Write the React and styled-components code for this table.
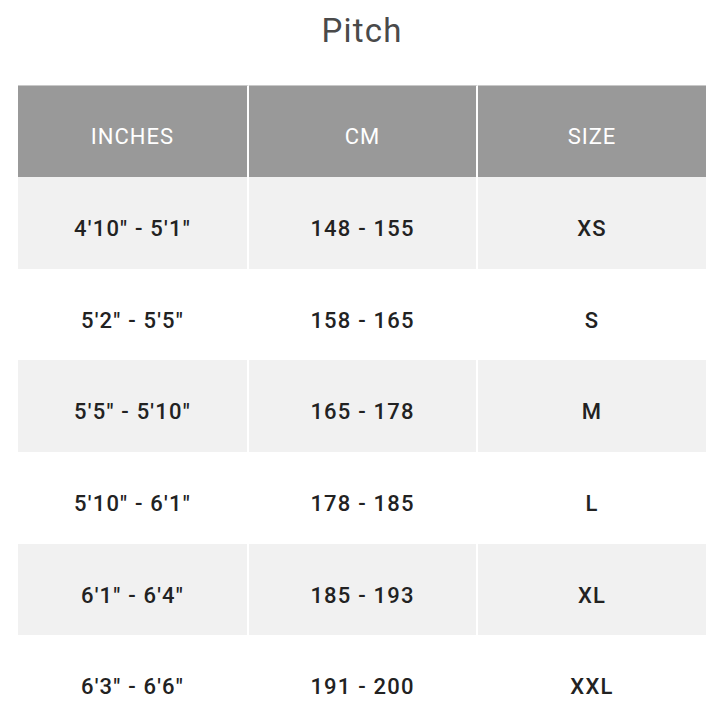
import React from "react";
import styled, { createGlobalStyle } from "styled-components";

const Global = createGlobalStyle`
  html, body { margin: 0; padding: 0; background: #fff; }
  body { font-family: Roboto, "DejaVu Sans", sans-serif; }
`;

const Page = styled.div`
  width: 722px;
  padding: 0 16px 0 18px;
  box-sizing: border-box;
`;

const Title = styled.h1`
  margin: 0;
  height: 85px;
  padding-top: 11px;
  box-sizing: border-box;
  text-align: center;
  font-size: 33px;
  font-weight: 400;
  color: #4a4a4a;
  line-height: 40px;
  letter-spacing: 1.2px;
`;

const Table = styled.table`
  width: 688px;
  border-collapse: separate;
  border-spacing: 0;
  table-layout: fixed;
`;

const Col = styled.col`
  width: ${(p) => p.$w}px;
`;

const HeadCell = styled.th`
  height: 92px;
  padding: 9px 0 0;
  background: #999999;
  border-top: 1px solid #c8c8c8;
  border-right: ${(p) => (p.$last ? "none" : "2px solid #fff")};
  box-sizing: border-box;
  color: #fff;
  font-size: 22px;
  font-weight: 400;
  text-align: center;
  vertical-align: middle;
  letter-spacing: 1px;
`;

const Row = styled.tr`
  background: ${(p) => (p.$striped ? "#f1f1f1" : "#fff")};
`;

const Cell = styled.td`
  height: 91.7px;
  padding: 11px 0 0;
  border-right: ${(p) => (p.$last ? "none" : "2px solid #fff")};
  box-sizing: border-box;
  color: #222;
  font-size: 22px;
  font-weight: 500;
  text-align: center;
  vertical-align: middle;
  letter-spacing: 1.2px;
`;

const rows = [
  ["4'10\" - 5'1\"", "148 - 155", "XS"],
  ["5'2\" - 5'5\"", "158 - 165", "S"],
  ["5'5\" - 5'10\"", "165 - 178", "M"],
  ["5'10\" - 6'1\"", "178 - 185", "L"],
  ["6'1\" - 6'4\"", "185 - 193", "XL"],
  ["6'3\" - 6'6\"", "191 - 200", "XXL"],
];

export default function App() {
  return (
    <Page>
      <Global />
      <Title>Pitch</Title>
      <Table>
        <colgroup>
          <Col $w={231} />
          <Col $w={229} />
          <Col $w={228} />
        </colgroup>
        <thead>
          <tr>
            <HeadCell>INCHES</HeadCell>
            <HeadCell>CM</HeadCell>
            <HeadCell $last>SIZE</HeadCell>
          </tr>
        </thead>
        <tbody>
          {rows.map((r, i) => (
            <Row key={i} $striped={i % 2 === 0}>
              <Cell>{r[0]}</Cell>
              <Cell>{r[1]}</Cell>
              <Cell $last>{r[2]}</Cell>
            </Row>
          ))}
        </tbody>
      </Table>
    </Page>
  );
}
